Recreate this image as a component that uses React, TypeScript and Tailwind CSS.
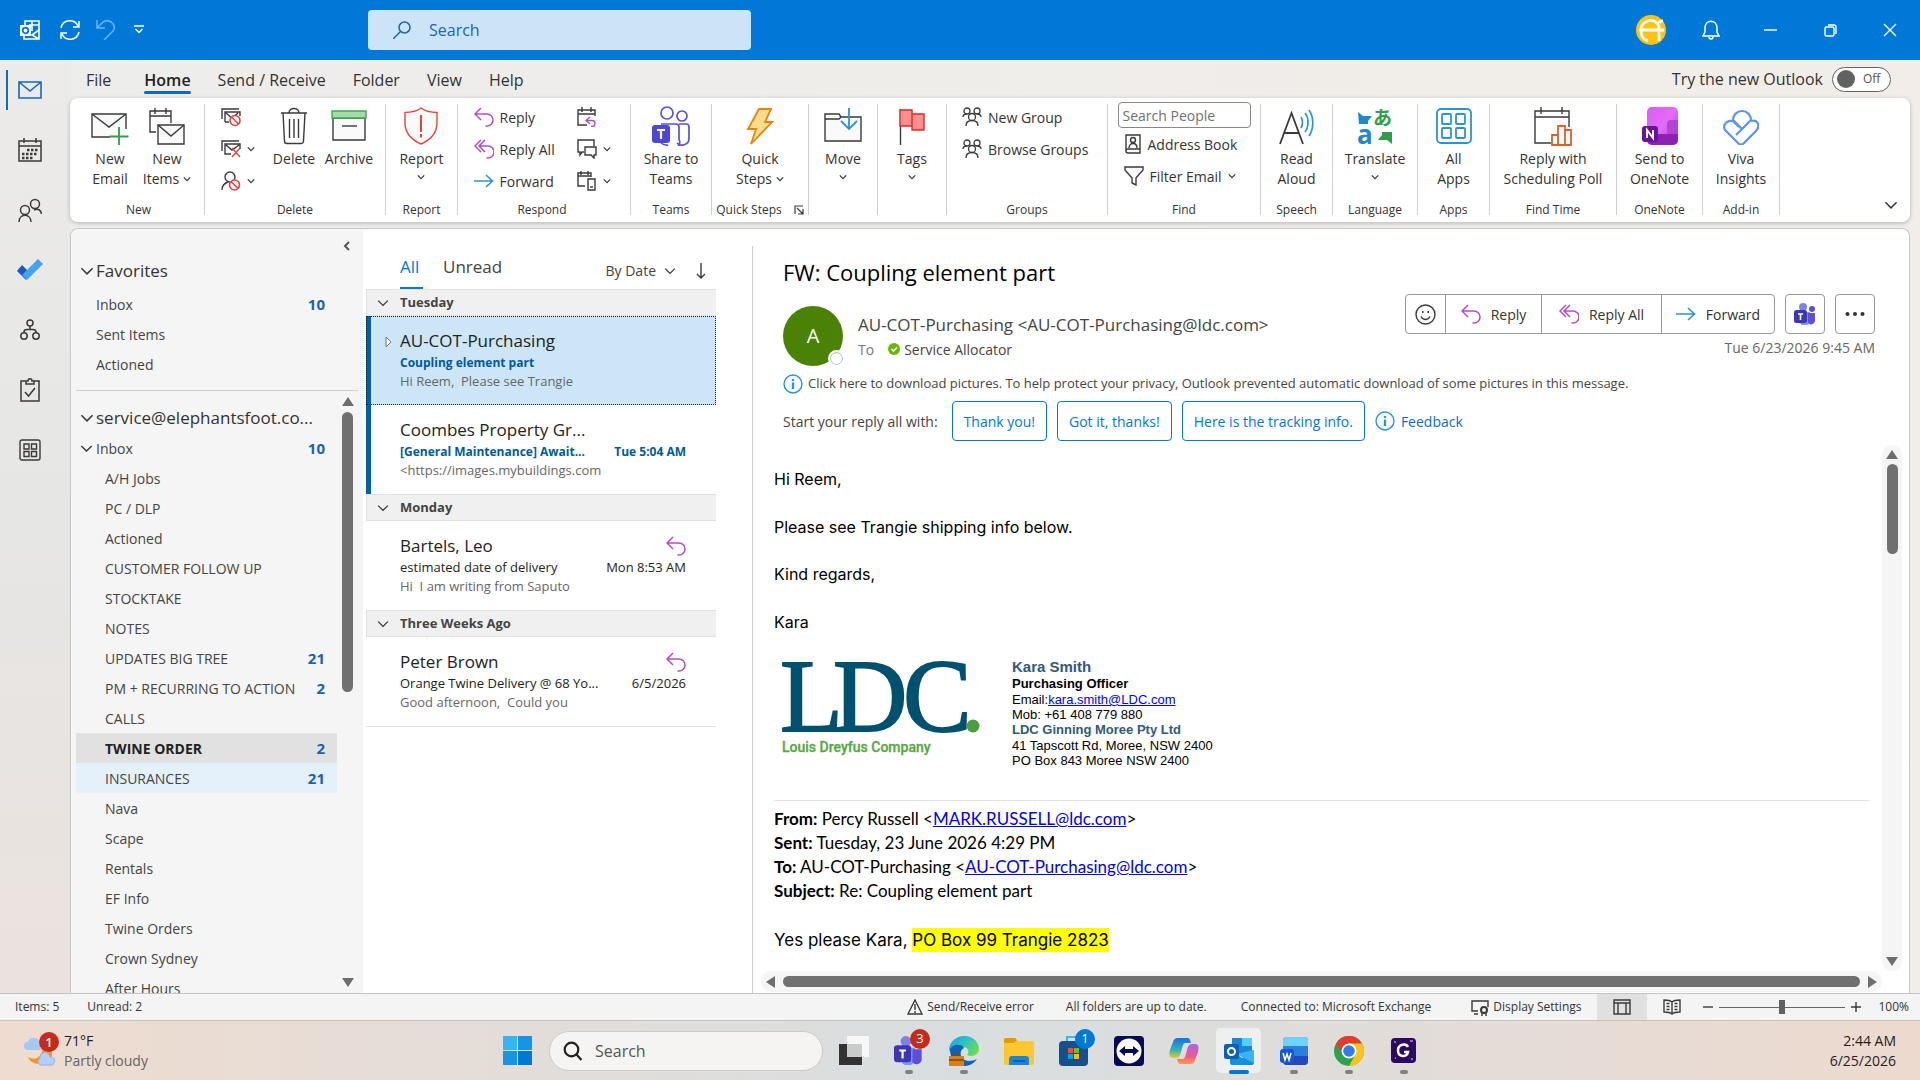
import type { ReactNode } from "react";

/* ---------- icons ---------- */

interface IconProps {
  w?: number;
  h?: number;
  box?: string;
  color?: string;
  sw?: number;
  children: ReactNode;
}

function Svg({ w = 20, h = w, box = `0 0 ${w} ${h}`, color = "#3b3a39", sw = 1.4, children }: IconProps) {
  return (
    <svg width={w} height={h} viewBox={box} fill="none" stroke={color} strokeWidth={sw} className="block shrink-0" aria-hidden="true">
      {children}
    </svg>
  );
}

const Chevron = ({ size = 8 }: { size?: number }) => (
  <Svg w={size} h={size} box="0 0 10 10" sw={size > 10 ? 1.1 : 1.6}><path d="M1 3l4 4 4-4" /></Svg>
);

const ReplyIcon = () => (
  <Svg color="#b14fbf" sw={1.5}><path d="M7 1L1 7l6 6M1 7h12a5.500 5.500 0 0 1 0 12h-1.500" /></Svg>
);
const ReplyAllIcon = () => (
  <Svg color="#b14fbf" sw={1.5}><path d="M7 1L1 7l6 6M11 1L5 7l6 6M5.500 7H14a5.500 5.500 0 0 1 0 12h-1.500" /></Svg>
);
const ForwardIcon = () => (
  <Svg color="#2b93d6" sw={1.6}><path d="M0 10h18M12 4l6.500 6-6.500 6" /></Svg>
);

const NewEmailIcon = () => (
  <Svg w={38} h={38}>
    <path d="M19 30H1V7h34v15" fill="#fafafa" /><path d="M1 7l17 13L35 7" />
    <path d="M28 20v19M18.500 29.500h19" stroke="#2e9e48" strokeWidth={1.8} />
  </Svg>
);
const NewItemsIcon = () => (
  <Svg w={38} h={38}>
    <path d="M8 25H2V4h21v12M2 9h21M7 1v6M18 1v6" /><path d="M10 18h26v19H10z" fill="#fafafa" /><path d="M10 18l13 11 13-11" />
  </Svg>
);
const Ban = ({ x, y }: { x: number; y: number }) => (
  <g stroke="#e8413c" strokeWidth={1.6}><circle cx={x} cy={y} r="5" fill="#fff" /><path d={`M${x - 3.500} ${y - 3.500}l7 7`} /></g>
);
const IgnoreIcon = () => (
  <Svg><path d="M4 15V5h15v4M4 15h4M1 12V2h17M5 6l6 5 6-5" /><Ban x={14} y={13.500} /></Svg>
);
const CleanUpIcon = () => (
  <Svg><path d="M10 15H4V5h15v5M1 12V2h17M5 6l6 5 7-5" /><path d="M11 9l8 9M19 9l-8 9" stroke="#e8413c" /></Svg>
);
const JunkIcon = () => (
  <Svg><circle cx="9" cy="6" r="5" /><path d="M1 19c0-4 3-7 6-8" /><Ban x={13.500} y={14} /></Svg>
);
const TrashIcon = () => (
  <Svg w={28} h={38}><path d="M1 6h26M9 6c0-6 10-6 10 0M3 6l1.500 28a2.500 2.500 0 0 0 2.500 2.500h14a2.500 2.500 0 0 0 2.500-2.500L25 6" /><path d="M9.500 12v19M14 12v19M18.500 12v19" /></Svg>
);
const ArchiveIcon = () => (
  <Svg w={36} h={38}><path d="M2 11h32v22H2z" fill="#fafafa" /><path d="M1 4h34v7H1z" fill="#a3dba9" stroke="#3fa656" /><path d="M11 19h15" /></Svg>
);
const ReportIcon = () => (
  <Svg w={34} h={38} color="#e8413c"><path d="M17 1c4 3 10 4.500 16 4.500V16c0 10-7 17-16 21C8 33 1 26 1 16V5.500C7 5.500 13 4 17 1z" fill="#fafafa" /><path d="M17 8v17M17 27v3.500" strokeWidth={2} /></Svg>
);
const MeetingIcon = () => (
  <Svg><path d="M10 18H1V3h17v6M1 7h17M5 0v5M14 0v5" /><path d="M13 10l-4 3.500 4 3.500M9 13.500h6a3 3 0 0 1 0 6h-1" stroke="#b14fbf" /></Svg>
);
const ChatIcon = () => (
  <Svg><path d="M7 13H5l-2 3v-3H1V1h16v6" /><path d="M8 8h11v8h-2v3l-3-3H8z" fill="#fafafa" /></Svg>
);
const MoreRespondIcon = () => (
  <Svg><path d="M8 15H1V2h13v4M1 5h13M4 0v4M11 0v4" /><path d="M11 8h7v11h-7z" fill="#fafafa" /><path d="M13 16h3" /></Svg>
);
const TeamsRibbonIcon = () => (
  <Svg w={38} h={40} color="#5b4fd6" sw={1.700}>
    <circle cx="15" cy="7" r="6" /><circle cx="30" cy="10" r="5" />
    <path d="M9 18h15a3 3 0 0 1 3 3v12a6 6 0 0 1-12 6h-1a9 9 0 0 1-7-5M27 18h7a3 3 0 0 1 3 3v11a7 7 0 0 1-12 5" />
    <rect x="0" y="19" width="18" height="18" rx="3" fill="#4f46d6" stroke="none" />
    <path d="M5 24h8M9 24v9" stroke="#fff" strokeWidth={2.200} />
  </Svg>
);
const BoltIcon = () => (
  <Svg w={28} h={38} color="#e8820c" sw={1.8}><path d="M13 2h12l-6 13h7L5 37l5-15H2z" fill="#fbdc8c" /></Svg>
);
const MoveIcon = () => (
  <Svg w={38} h={36}><path d="M1 6h14l2 3h20v24H1z" fill="#fafafa" /><path d="M1 11h14l2-2" /><path d="M25 0v21M17 13l8 8 8-8" stroke="#2b93d6" strokeWidth={1.8} /></Svg>
);
const FlagIcon = () => (
  <Svg w={26} h={38}><path d="M1.500 2v36" /><path d="M1 3h12v4h12v16H13v-4H1z" fill="#ff8f8c" stroke="#d92b28" /><path d="M13 7v12" stroke="#d92b28" /></Svg>
);
const GroupIcon = () => (
  <Svg sw={1.300}>
    <circle cx="5" cy="4" r="3" /><circle cx="15" cy="4" r="3" /><circle cx="10" cy="10" r="3.500" />
    <path d="M1 10c0-2 2-3 4-3M19 10c0-2-2-3-4-3M4 19c0-4 3-5.500 6-5.500s6 1.500 6 5.500" />
  </Svg>
);
const AddressIcon = () => (
  <Svg w={18} h={20}><path d="M2 1h14v18H4a2 2 0 0 1-2-2zM2 17c0-1.500 1-2 2-2h12" /><circle cx="9" cy="6" r="2.500" /><path d="M5 14c0-3 2-4.500 4-4.500s4 1.500 4 4.500" /></Svg>
);
const FunnelIcon = () => (
  <Svg><path d="M1 1h18v3l-7 8v7l-4-2v-5L1 4z" fill="#fafafa" /></Svg>
);
const ReadAloudIcon = () => (
  <Svg w={36} h={38}><path d="M1 37L12.500 6 24 37M5 26h15" strokeWidth={1.8} /><path d="M22 10c2 3 2 8 0 11M26 6c4 5 4 14 0 19M30 3c5 7 5 19 0 26" stroke="#2b93d6" strokeWidth={1.700} /></Svg>
);
const TranslateIcon = () => (
  <Svg w={36} h={38}>
    <path d="M1 5l5 4h9l-4 5v3H2z" fill="#1e88cf" stroke="none" />
    <path d="M35 37l-5-4h-9l4-5v-3h10z" fill="#2e9e48" stroke="none" />
    <text x="0" y="37" fontSize="26" fontWeight="700" fill="#1e88cf" stroke="none" fontFamily="Open Sans">a</text>
    <text x="16" y="18" fontSize="19" fontWeight="700" fill="#2e9e48" stroke="none" fontFamily="Noto Sans CJK JP">あ</text>
  </Svg>
);
const AppsIcon = () => (
  <Svg w={36} h={38} color="#2b93d6" sw={1.8}>
    <rect x="1" y="2" width="34" height="34" rx="4" />
    <rect x="6" y="7" width="9" height="10" rx="1" /><rect x="20" y="7" width="9" height="10" rx="1" />
    <rect x="6" y="21" width="9" height="10" rx="1" /><rect x="20" y="21" width="9" height="10" rx="1" />
  </Svg>
);
const PollIcon = () => (
  <Svg w={38} h={40}>
    <path d="M17 37H1V5h34v16M1 11h34M7 1v7M28 1v7" />
    <path d="M18 39V29h6v10zM24 39V20h7v19zM31 39V24h6v15z" fill="#fff" stroke="#e65a28" strokeWidth={1.8} />
  </Svg>
);
const OneNoteIcon = () => (
  <Svg w={36} h={38}>
    <defs><linearGradient id="note" x1="0" y1="0" x2="1" y2="1"><stop stopColor="#d95cf5" /><stop offset=".5" stopColor="#e46cf8" /><stop offset="1" stopColor="#b03ad0" /></linearGradient></defs>
    <rect x="5" y="0" width="31" height="38" rx="5" fill="url(#note)" stroke="none" />
    <path d="M5 27h31v6a5 5 0 0 1-5 5H10a5 5 0 0 1-5-5z" fill="#8c22b0" stroke="none" />
    <path d="M25 27V17a4 4 0 0 1 4-4h7v14z" fill="#b544d6" stroke="none" />
    <rect x="0" y="19" width="16" height="16" rx="3" fill="#6a12a0" stroke="none" />
    <path d="M5 31v-8l6 8v-8" stroke="#fff" strokeWidth={2} />
  </Svg>
);
const VivaIcon = () => (
  <Svg w={36} h={38} color="#5b93f5" sw={2.200}>
    <path d="M19 22L10 13a9 9 0 1 1 18 0L13 28" />
    <path d="M10 14c-8-1-11 6-7 10l12 12c2 2 4 2 6 0l12-12c5-6 1-12-5-10M10 14l6 6" />
  </Svg>
);

/* ---------- ribbon ---------- */

function Group({ label, className, children }: { label: ReactNode; className: string; children: ReactNode }) {
  return (
    <>
      <section className={`flex h-[115px] shrink-0 flex-col ${className}`}>
        <div className="flex flex-1 justify-center">{children}</div>
        <div className="flex items-center justify-center text-[12px] leading-3 whitespace-nowrap text-[#333]">{label}</div>
      </section>
      <div className="mt-[3px] h-[111px] w-px shrink-0 bg-[#cfcfcf]" />
    </>
  );
}

interface BigProps {
  icon: ReactNode;
  lines: string[];
  chevron?: "inline" | "below";
  className?: string;
}

function Big({ icon, lines, chevron, className = "" }: BigProps) {
  return (
    <button className={`flex flex-col items-center pt-[6px] text-[14px] leading-5 whitespace-nowrap ${className}`}>
      <span className="mb-1 flex h-[38px] items-center">{icon}</span>
      <span>{lines[0]}</span>
      {lines[1] && (
        <span className="flex items-center gap-1">{lines[1]}{chevron === "inline" && <Chevron />}</span>
      )}
      {chevron === "below" && <span className="flex h-4 items-center"><Chevron /></span>}
    </button>
  );
}

function Small({ icon, text, chevron }: { icon: ReactNode; text?: string; chevron?: boolean }) {
  return (
    <button className="flex h-8 items-center gap-[6px] text-[14px] whitespace-nowrap" aria-label={text ?? "More"}>
      {icon}{text}{chevron && <Chevron />}
    </button>
  );
}

function Ribbon() {
  return (
    <div className="mr-[10px] flex h-[124px] rounded-lg bg-white pt-[3px] text-[#333] shadow-[0_1px_4px_rgba(0,0,0,0.25)]">
      <Group label="New" className="w-[134px] pl-[3px]">
        <Big className="w-[57px]" icon={<NewEmailIcon />} lines={["New", "Email"]} />
        <Big className="w-[57px]" icon={<NewItemsIcon />} lines={["New", "Items"]} chevron="inline" />
      </Group>
      <Group label="Delete" className="w-[180px]">
        <div className="w-[46px] shrink-0">
          <Small icon={<IgnoreIcon />} /><Small icon={<CleanUpIcon />} chevron /><Small icon={<JunkIcon />} chevron />
        </div>
        <Big className="w-[54px]" icon={<TrashIcon />} lines={["Delete"]} />
        <Big className="-mr-2 w-[56px]" icon={<ArchiveIcon />} lines={["Archive"]} />
      </Group>
      <Group label="Report" className="w-[71px]">
        <Big icon={<ReportIcon />} lines={["Report"]} chevron="below" />
      </Group>
      <Group label="Respond" className="w-[172px] pr-1">
        <div className="w-[103px]">
          <Small icon={<ReplyIcon />} text="Reply" /><Small icon={<ReplyAllIcon />} text="Reply All" /><Small icon={<ForwardIcon />} text="Forward" />
        </div>
        <div>
          <Small icon={<MeetingIcon />} /><Small icon={<ChatIcon />} chevron /><Small icon={<MoreRespondIcon />} chevron />
        </div>
      </Group>
      <Group label="Teams" className="w-[80px]">
        <Big icon={<TeamsRibbonIcon />} lines={["Share to", "Teams"]} />
      </Group>
      <Group
        className="w-[96px]"
        label={
          <>
            <span className="mr-3">Quick Steps</span>
            <Svg w={10} h={10} sw={1.2}><path d="M1 9V1h8M3 3l6 6M9 4v5H4" /></Svg>
          </>
        }
      >
        <Big icon={<BoltIcon />} lines={["Quick", "Steps"]} chevron="inline" />
      </Group>
      <Group label="" className="w-[68px]"><Big icon={<MoveIcon />} lines={["Move"]} chevron="below" /></Group>
      <Group label="" className="w-[68px]"><Big icon={<FlagIcon />} lines={["Tags"]} chevron="below" /></Group>
      <Group label="Groups" className="w-[160px]">
        <div className="w-[130px]">
          <Small icon={<GroupIcon />} text="New Group" /><Small icon={<GroupIcon />} text="Browse Groups" />
        </div>
      </Group>
      <Group label="Find" className="w-[152px]">
        <div className="w-[133px] pt-px">
          <input aria-label="Search People" placeholder="Search People" className="block h-[26px] w-full rounded-sm border border-[#8a8886] px-1 text-[14px] placeholder:text-[#707070]" />
          <div className="pl-[6px]"><Small icon={<AddressIcon />} text="Address Book" /><Small icon={<FunnelIcon />} text="Filter Email" chevron /></div>
        </div>
      </Group>
      <Group label="Speech" className="w-[71px]"><Big icon={<ReadAloudIcon />} lines={["Read", "Aloud"]} /></Group>
      <Group label="Language" className="w-[84px]"><Big icon={<TranslateIcon />} lines={["Translate"]} chevron="below" /></Group>
      <Group label="Apps" className="w-[71px]"><Big icon={<AppsIcon />} lines={["All", "Apps"]} /></Group>
      <Group label="Find Time" className="w-[126px]"><Big icon={<PollIcon />} lines={["Reply with", "Scheduling Poll"]} /></Group>
      <Group label="OneNote" className="w-[85px]"><Big icon={<OneNoteIcon />} lines={["Send to", "OneNote"]} /></Group>
      <Group label="Add-in" className="w-[76px]"><Big icon={<VivaIcon />} lines={["Viva", "Insights"]} /></Group>
      <button className="mt-auto mr-3 mb-[10px] ml-auto" aria-label="Collapse ribbon"><Chevron size={14} /></button>
    </div>
  );
}

/* ---------- title bar, tabs, rail ---------- */

function TitleBar() {
  return (
    <header className="flex h-[60px] shrink-0 items-center bg-[#0078d7] pl-5">
      <Svg w={20} h={20} color="#fff" sw={1.6}>
        <path d="M5 5V1h14v10M9 5h10M12 1v10" /><path d="M19 9v10H4v-3M19 10l-7 5 7 4" />
        <rect x="0" y="5" width="11" height="11" fill="#fff" stroke="none" /><circle cx="5.500" cy="10.500" r="2.800" stroke="#0078d7" strokeWidth={1.800} />
      </Svg>
      <button className="ml-5" aria-label="Send/Receive all folders">
        <Svg color="#fff" sw={1.500}><path d="M1 8a9 9 0 0 1 17-2M19 1v6h-6M19 12a9 9 0 0 1-17 2M1 19v-6h6" /></Svg>
      </button>
      <button className="ml-4" aria-label="Undo">
        <Svg color="#6ab4f0" sw={1.500}><path d="M1 0v8h8M1 8l6-6c7-4 14 3 10 9l-9 9" /></Svg>
      </button>
      <button className="ml-[18px]" aria-label="Customize toolbar">
        <Svg w={10} h={10} color="#fff"><path d="M0 1h10M1.500 4L5 7.500 8.500 4" /></Svg>
      </button>
      <label className="ml-6 flex h-10 w-[383px] items-center gap-[18px] rounded bg-[#cce4f7] pl-[25px] lg:ml-[224px]">
        <Svg w={18} h={18} color="#1a66b0" sw={1.500}><circle cx="11.500" cy="6.500" r="5.500" /><path d="M7.500 10.500L0 18" /></Svg>
        <input aria-label="Search" placeholder="Search" className="w-72 bg-transparent text-[16px] outline-none placeholder:text-[#1a66b0]" />
      </label>
      <div className="ml-auto flex items-center pr-[23px]">
        <Svg w={30} h={30} color="#fff" sw={2.800}>
          <circle cx="15" cy="15" r="15" fill="#ffc20e" stroke="none" /><path d="M12 26C3 23 2 9 12 6c6-2 10 2 11 6v14M3 15h25M23 8c1-2 3-2 4-2" />
        </Svg>
        <button className="ml-9" aria-label="Notifications">
          <Svg w={18} h={20} color="#fff" sw={1.500}><path d="M1 16h16l-2-4V8c0-9-12-9-12 0v4zM7 17c0 2.500 4 2.500 4 0" /></Svg>
        </button>
        <button className="ml-11" aria-label="Minimize"><Svg w={13} h={13} color="#fff"><path d="M0 6h13" /></Svg></button>
        <button className="ml-[47px]" aria-label="Restore"><Svg w={13} h={13} color="#fff"><rect x="1" y="3" width="9" height="9" rx="1.500" /><path d="M4 1h6a2 2 0 0 1 2 2v7" /></Svg></button>
        <button className="ml-[46px]" aria-label="Close"><Svg w={14} h={14} color="#fff" sw={1.300}><path d="M1 1l12 12M13 1L1 13" /></Svg></button>
      </div>
    </header>
  );
}

const tabs = ["File", "Home", "Send / Receive", "Folder", "View", "Help"];

function TabRow() {
  return (
    <nav className="flex h-[38px] items-center pl-4 text-[16px] text-[#333]">
      <div className="flex gap-[27px] pt-[2px]">
        {tabs.map((t) =>
          t === "Home" ? (
            <button key={t} className="relative ml-[6px] font-semibold text-[#222]">
              {t}
              <span className="absolute inset-x-0 -bottom-[2px] h-[3px] rounded bg-[#0f6cbd]" />
            </button>
          ) : (
            <button key={t}>{t}</button>
          ),
        )}
      </div>
      <label htmlFor="new-outlook" className="ml-auto flex items-center gap-[9px] pr-[29px] text-[16px]">
        Try the new Outlook
        <span className="flex h-[25px] w-[59px] items-center gap-2 rounded-full border border-[#616161] bg-white pl-1 text-[12px] text-[#555]">
          <input id="new-outlook" type="checkbox" role="switch" className="h-[18px] w-[18px] appearance-none rounded-full bg-[#616161]" />
          Off
        </span>
      </label>
    </nav>
  );
}

const railIcons: { name: string; icon: ReactNode }[] = [
  { name: "Mail", icon: <Svg w={24} h={18} color="#0f6cbd" sw={1.600}><path d="M1 1h22v16H1zM1 1l11 9L23 1" /></Svg> },
  {
    name: "Calendar",
    icon: (
      <Svg w={24} h={24}>
        <path d="M1 3h22v20H1zM1 8h22M6 0v5M18 0v5" strokeWidth={1.500} />
        <path d="M9 12h11M4 16h16M4 20h11" strokeWidth={2.500} strokeDasharray="2.500 1.500" />
      </Svg>
    ),
  },
  { name: "People", icon: <Svg w={24} h={24} sw={1.500}><circle cx="17" cy="6" r="4.500" /><path d="M16 12c4-2 7 0 7.500 4" /><circle cx="7" cy="12" r="4.500" /><path d="M1 24c0-9 12-9 12 0" /></Svg> },
  {
    name: "To Do",
    icon: (
      <Svg w={26} h={22}>
        <path d="M5 6l8 8-4 7L0 12z" fill="#185abd" stroke="none" /><path d="M21 0l5 5L10 21l-5-5z" fill="#41a5ee" stroke="none" />
      </Svg>
    ),
  },
  { name: "Org Explorer", icon: <Svg w={20} h={22} sw={1.500}><circle cx="10" cy="4" r="3" /><circle cx="4" cy="17" r="3.200" /><circle cx="16" cy="17" r="3.200" /><path d="M10 7v4M4 13c0-2 1-2.500 3-2.500h6c2 0 3 .5 3 2.500" /></Svg> },
  { name: "Tasks", icon: <Svg w={20} h={24} sw={1.500}><path d="M6 3H1v20h18V3h-5M6 6V3h2c0-3 4-3 4 0h2v3zM5 14l3.500 4L15 10" /></Svg> },
  { name: "More apps", icon: <Svg w={22} h={22}><rect x="1" y="1" width="20" height="20" rx="2" /><path d="M5 5h5v5H5zM12.500 5h5v5h-5zM5 12.500h5v5H5zM12.500 12.500h5v5h-5z" /></Svg> },
];

function Rail() {
  return (
    <aside className="flex w-[70px] shrink-0 flex-col bg-linear-to-b from-[#ecebea] via-[#e6e6e4] to-[#ebe2de]">
      {railIcons.map((r, i) => (
        <button key={r.name} aria-label={r.name} className="relative flex h-[60px] w-[59px] items-center justify-center pb-px">
          {i === 0 && <span className="absolute top-[10px] left-[6px] h-10 w-[2px] bg-[#0f6cbd]" />}
          {r.icon}
        </button>
      ))}
    </aside>
  );
}

/* ---------- folder pane ---------- */

const Triangle = ({ d }: { d: string }) => <Svg w={12} h={12}><path d={d} fill="#6e6e6e" stroke="none" /></Svg>;
const UP = "M0 10h12L6 1z";
const DOWN = "M0 2h12L6 11z";
const LEFT = "M10 0v12L1 6z";
const RIGHT = "M2 0v12l9-6z";

interface Folder {
  name: string;
  count?: number;
}

const favorites: Folder[] = [{ name: "Inbox", count: 10 }, { name: "Sent Items" }, { name: "Actioned" }];

const folders: Folder[] = [
  { name: "A/H Jobs" },
  { name: "PC / DLP" },
  { name: "Actioned" },
  { name: "CUSTOMER FOLLOW UP" },
  { name: "STOCKTAKE" },
  { name: "NOTES" },
  { name: "UPDATES BIG TREE", count: 21 },
  { name: "PM + RECURRING TO ACTION", count: 2 },
  { name: "CALLS" },
  { name: "TWINE ORDER", count: 2 },
  { name: "INSURANCES", count: 21 },
  { name: "Nava" },
  { name: "Scape" },
  { name: "Rentals" },
  { name: "EF Info" },
  { name: "Twine Orders" },
  { name: "Crown Sydney" },
  { name: "After Hours" },
];

function FolderRow({ folder, className = "pl-5" }: { folder: Folder; className?: string }) {
  const tone =
    folder.name === "TWINE ORDER" ? "bg-[#e1e1e1] font-bold text-[#222]" : folder.name === "INSURANCES" ? "bg-[#e5f1fa]" : "";
  return (
    <button className={`flex h-[30px] w-full items-center justify-between pr-3 text-left text-[14px] whitespace-nowrap ${tone} ${className}`}>
      {folder.name}
      {folder.count && <span className="text-[15px] font-bold text-[#1a62b0]">{folder.count}</span>}
    </button>
  );
}

function FolderPane() {
  return (
    <div className="flex w-[292px] shrink-0 flex-col overflow-hidden rounded-tl-lg bg-[#f5f5f5] pl-[5px] text-[#444]">
      <div className="flex h-6 items-end justify-end pr-3">
        <button aria-label="Collapse folder pane"><Svg w={8} h={14} sw={2} color="#555"><path d="M6 3L2 7l4 4" /></Svg></button>
      </div>
      <button className="flex h-9 items-center gap-[2px] pl-1 text-[17px] text-[#333]"><Chevron size={14} />Favorites</button>
      <div className="mr-[26px]">
        {favorites.map((f) => <FolderRow key={f.name} folder={f} />)}
      </div>
      <div className="mt-[11px] mr-[5px] h-px shrink-0 bg-[#cfcfcf]" />
      <div className="flex min-h-0 flex-1">
        <div className="min-w-0 flex-1 overflow-hidden pt-3">
          <button className="flex h-[30px] items-center gap-[2px] pl-1 text-[17px] text-[#333]"><Chevron size={14} />service@elephantsfoot.co...</button>
          <div className="flex items-center">
            <span className="w-5 shrink-0 pl-1"><Chevron size={13} /></span>
            <FolderRow folder={{ name: "Inbox", count: 10 }} className="pl-0" />
          </div>
          {folders.map((f, i) => <FolderRow key={i} folder={f} className="pl-[29px]" />)}
        </div>
        <div className="flex w-[26px] flex-col items-center pt-[5px] pr-[5px] pb-[5px]">
          <Triangle d={UP} />
          <div className="my-1 flex min-h-0 flex-1 flex-col"><div className="h-1/2 w-[11px] rounded-full bg-[#707070]" /></div>
          <Triangle d={DOWN} />
        </div>
      </div>
    </div>
  );
}

/* ---------- message list ---------- */

interface Message {
  from: string;
  subject: string;
  preview: string;
  date?: string;
  unread?: boolean;
  selected?: boolean;
}

const days: { label: string; messages: Message[] }[] = [
  {
    label: "Tuesday",
    messages: [
      { from: "AU-COT-Purchasing", subject: "Coupling element part", preview: "Hi Reem,  Please see Trangie", unread: true, selected: true },
      { from: "Coombes Property Gr...", subject: "[General Maintenance] Await...", preview: "<https://images.mybuildings.com", date: "Tue 5:04 AM", unread: true },
    ],
  },
  { label: "Monday", messages: [{ from: "Bartels, Leo", subject: "estimated date of delivery", preview: "Hi  I am writing from Saputo", date: "Mon 8:53 AM" }] },
  { label: "Three Weeks Ago", messages: [{ from: "Peter Brown", subject: "Orange Twine Delivery @ 68 Yo...", preview: "Good afternoon,  Could you", date: "6/5/2026" }] },
];

function MessageRow({ m }: { m: Message }) {
  return (
    <button
      className={`relative flex h-[89px] w-full flex-col items-stretch justify-start pt-[13px] pr-[30px] text-left whitespace-pre ${
        m.unread ? "border-l-[5px] border-l-[#0060a8] pl-[29px]" : "pl-[34px]"
      } ${m.selected ? "bg-[#cde6f7] outline-1 -outline-offset-1 outline-dotted outline-[#222]" : ""}`}
    >
      {m.selected && <span className="absolute top-5 left-[14px]"><Svg w={8} h={12} sw={1} color="#777"><path d="M1 1v10l5-5z" fill="#fff" /></Svg></span>}
      <span className="flex h-6 items-center justify-between text-[17px] text-[#222]">
        {m.from}
        {!m.unread && <ReplyIcon />}
      </span>
      <span className={`flex h-[19px] items-center justify-between ${m.unread ? "text-[12px] font-bold text-[#005a9e]" : "text-[13px] text-[#222]"}`}>
        <span>{m.subject}</span>
        <span>{m.date}</span>
      </span>
      <span className="block text-[13px] leading-[18px] text-[#666]">{m.preview}</span>
    </button>
  );
}

function MessageList() {
  return (
    <div className="w-[389px] shrink-0 pr-9 pl-[3px]">
      <div className="flex h-[60px] items-end pr-[10px] pl-[34px] text-[#444]">
        <button className="flex h-[38px] w-[23px] border-b-2 border-[#0078d4] pt-1 text-[17px] leading-6 text-[#0078d4]">All</button>
        <button className="ml-5 flex h-[38px] pt-1 text-[17px] leading-6">Unread</button>
        <button className="ml-auto flex h-[29px] items-center gap-2 pb-2 text-[14px]">By Date <Chevron size={12} /></button>
        <button className="ml-5 flex h-[29px] items-center pb-2" aria-label="Reverse sort"><Svg w={10} h={16}><path d="M5 0v15M1 11l4 4 4-4" /></Svg></button>
      </div>
      {days.map((d) => (
        <section key={d.label}>
          <h3 className="flex h-[27px] items-center border-y border-l border-[#e1e1e1] bg-[#f0f0f0] pl-[10px] text-[13px] font-bold text-[#444]">
            <span className="w-[23px]"><Chevron size={12} /></span>
            {d.label}
          </h3>
          {d.messages.map((m) => <MessageRow key={m.from} m={m} />)}
        </section>
      ))}
      <div className="h-px bg-[#e1e1e1]" />
    </div>
  );
}

/* ---------- reading pane ---------- */

const InfoIcon = () => (
  <Svg w={20} h={20} color="#2b93d6"><circle cx="10" cy="10" r="9" fill="#f4fafe" /><path d="M10 8.500V15M10 5v2" strokeWidth={2.200} /></Svg>
);

const TeamsMini = ({ size = 22 }: { size?: number }) => (
  <Svg w={size} h={size} box="0 0 22 22">
    <circle cx="9" cy="4" r="4" fill="#7b83eb" stroke="none" /><circle cx="18" cy="6" r="3" fill="#5b4fd6" stroke="none" />
    <path d="M5 9h11v8a5 5 0 0 1-11 0z" fill="#7b93f5" stroke="none" /><path d="M14 10h7v8a4 4 0 0 1-7 2z" fill="#5b4fd6" stroke="none" />
    <rect x="0" y="7" width="13" height="13" rx="2.500" fill="#3d36b0" stroke="none" /><path d="M4 11h5M6.500 11v6" stroke="#fff" strokeWidth={1.600} />
  </Svg>
);

const quickReplies = ["Thank you!", "Got it, thanks!", "Here is the tracking info."];
const box = "flex h-10 items-center justify-center rounded border border-[#999] bg-white";

function MessageHeader() {
  return (
    <div className="shrink-0 pr-[34px] pl-[30px]">
      <h1 className="mt-[27px] text-[22px] leading-8 text-black">FW: Coupling element part</h1>
      <div className="mt-[18px] flex h-[64px]">
        <div className="relative flex h-[60px] w-[60px] shrink-0 items-center justify-center rounded-full bg-[#498205] text-[20px] text-white">
          A
          <span className="absolute -right-[2px] -bottom-[1px] h-[17px] w-[17px] rounded-full border-2 border-white bg-white shadow-[inset_0_0_0_1px_#9fb8c8]" />
        </div>
        <div className="pt-[7px] pl-[15px] text-[#444]">
          <p className="text-[17px] leading-6">AU-COT-Purchasing &lt;AU-COT-Purchasing@ldc.com&gt;</p>
          <p className="flex h-6 items-center text-[14px]">
            <span className="text-[#777]">To</span>
            <span className="mr-1 ml-[14px]"><Svg w={12} h={12} color="#fff"><circle cx="6" cy="6" r="6" fill="#6bb700" stroke="none" /><path d="M3.500 6l2 2 3.500-3.500" /></Svg></span>
            Service Allocator
          </p>
        </div>
        <div className="-mt-3 ml-auto text-[14px] text-[#333]">
          <div className="flex gap-[10px]">
            <div className="flex h-10 divide-x divide-[#999] rounded border border-[#999]">
              <button className="flex w-10 items-center justify-center" aria-label="React">
                <Svg w={21} h={21}><circle cx="10.500" cy="10.500" r="9.500" /><path d="M6 12.500c2 4 7 4 9 0" /><path d="M7 8h1.500M12.500 8H14" strokeWidth={2.200} /></Svg>
              </button>
              <button className="flex w-[96px] items-center justify-center gap-[10px]"><ReplyIcon />Reply</button>
              <button className="flex w-[120px] items-center justify-center gap-[10px]"><ReplyAllIcon />Reply All</button>
              <button className="flex w-[112px] items-center justify-center gap-[10px]"><ForwardIcon />Forward</button>
            </div>
            <button className={`${box} w-10`} aria-label="Share to Teams"><TeamsMini /></button>
            <button className={`${box} w-10`} aria-label="More actions">
              <Svg w={20} h={6}><g fill="#333" stroke="none"><circle cx="2.500" cy="3" r="2" /><circle cx="10" cy="3" r="2" /><circle cx="17.500" cy="3" r="2" /></g></Svg>
            </button>
          </div>
          <p className="pt-1 text-right leading-5 text-[#666]">Tue 6/23/2026 9:45 AM</p>
        </div>
      </div>
      <p className="mt-1 flex h-5 items-center gap-[5px] text-[13px] whitespace-nowrap text-[#444]">
        <InfoIcon />
        Click here to download pictures. To help protect your privacy, Outlook prevented automatic download of some pictures in this message.
      </p>
      <div className="mt-[7px] flex h-10 items-center text-[14px] text-[#444]">
        <span className="mr-[14px]">Start your reply all with:</span>
        {quickReplies.map((q) => (
          <button key={q} className="mr-[10px] h-full rounded border border-[#0078d4] px-[11px] text-[#0078d4]">{q}</button>
        ))}
        <a href="#feedback" className="flex items-center gap-[6px] text-[#0f6cbd]"><InfoIcon />Feedback</a>
      </div>
    </div>
  );
}

const link = "text-[#0000ee] underline";

function LdcLogo() {
  return (
    <svg width="200" height="98" viewBox="0 0 200 98" className="block shrink-0" role="img" aria-label="LDC Louis Dreyfus Company">
      <text x="-1 52 122" y="73" fontFamily="Liberation Serif" fontSize="103" fill="#00506f" stroke="#00506f" strokeWidth="1.8">LDC</text>
      <circle cx="192" cy="68" r="6.500" fill="#4a9e3e" />
      <text x="1" y="94" fontFamily="Roboto" fontSize="14" fontWeight="500" fill="#57a843" stroke="#57a843" strokeWidth="0.3">Louis Dreyfus Company</text>
    </svg>
  );
}

function MessageBody() {
  return (
    <div className="min-w-0 flex-1 overflow-hidden pr-3 pl-[21px] text-black">
      <div className="font-[Inter,sans-serif] text-[16px] leading-6">
        <p className="mt-[22px]">Hi Reem,</p>
        <p className="mt-6">Please see Trangie shipping info below.</p>
        <p className="mt-[23px]">Kind regards,</p>
        <p className="mt-6">Kara</p>
      </div>
      <div className="mt-6 flex h-[108px] pl-[7px] font-['Liberation_Sans',Arial,sans-serif] text-[13px] leading-[15px]">
        <LdcLogo />
        <div className="pl-[31px]">
          <p className="text-[15px] leading-[18px] font-bold text-[#305a78]">Kara Smith</p>
          <p className="leading-4 font-bold">Purchasing Officer</p>
          <p>Email:<a href="mailto:kara.smith@LDC.com" className={link}>kara.smith@LDC.com</a></p>
          <p>Mob: +61 408 779 880</p>
          <p className="leading-4 font-bold text-[#305a78]">LDC Ginning Moree Pty Ltd</p>
          <p>41 Tapscott Rd, Moree, NSW 2400</p>
          <p>PO Box 843 Moree NSW 2400</p>
        </div>
      </div>
      <hr className="mt-[34px] border-[#e1e1e1]" />
      <div className="mt-[6px] font-[Lato,sans-serif] text-[17px] leading-6">
        <p><b>From:</b> Percy Russell &lt;<a href="mailto:MARK.RUSSELL@ldc.com" className={link}>MARK.RUSSELL@ldc.com</a>&gt;</p>
        <p><b>Sent:</b> Tuesday, 23 June 2026 4:29 PM</p>
        <p><b>To:</b> AU-COT-Purchasing &lt;<a href="mailto:AU-COT-Purchasing@ldc.com" className={link}>AU-COT-Purchasing@ldc.com</a>&gt;</p>
        <p><b>Subject:</b> Re: Coupling element part</p>
      </div>
      <p className="mt-[25px] font-[Inter,sans-serif] text-[17px] leading-6">
        Yes please Kara, <mark className="bg-[#ffff00] py-[2px]">PO Box 99 Trangie 2823</mark>
      </p>
    </div>
  );
}

function ReadingPane() {
  return (
    <main className="flex min-w-0 flex-1 flex-col">
      <div className="mt-[17px] flex min-h-0 flex-1 flex-col border-l border-[#cfcfcf]">
        <div className="-mt-[17px]"><MessageHeader /></div>
        <div className="flex min-h-0 flex-1 pt-1 pr-[7px]">
          <MessageBody />
          <div className="flex w-5 flex-col items-center rounded-full bg-[#f5f5f5] py-1">
            <Triangle d={UP} />
            <div className="mt-[3px] flex min-h-0 flex-1 flex-col"><div className="h-[90px] w-[11px] rounded-full bg-[#707070]" /></div>
            <Triangle d={DOWN} />
          </div>
        </div>
        <div className="mr-[27px] mb-px ml-2 flex h-[21px] items-center gap-[6px] rounded-full bg-[#f5f5f5] px-1">
          <Triangle d={LEFT} />
          <div className="h-[11px] flex-1 rounded-full bg-[#707070]" />
          <Triangle d={RIGHT} />
        </div>
      </div>
    </main>
  );
}

/* ---------- status bar ---------- */

function StatusBar() {
  return (
    <footer className="flex h-7 shrink-0 items-center border-y border-[#c4c4c4] bg-[#f4f4f4] pl-[15px] text-[12px] whitespace-nowrap text-[#333]">
      <span>Items: 5</span>
      <span className="ml-7">Unread: 2</span>
      <div className="ml-auto flex h-full items-center">
        <Svg w={16} h={16}><path d="M8 1l7 14H1zM8 5v6M8 12v2" /></Svg>
        <span className="mr-8 ml-1">Send/Receive error</span>
        <span className="mr-[34px]">All folders are up to date.</span>
        <span className="mr-10">Connected to: Microsoft Exchange</span>
        <button className="flex items-center gap-1">
          <Svg w={18} h={17}><path d="M7 12H1V2h16v6M3 15h4" /><circle cx="13" cy="11" r="3" strokeWidth={2} /><path d="M11 14v3M15 14v3" /></Svg>
          Display Settings
        </button>
        <button className="ml-4 flex h-full w-[50px] items-center justify-center bg-[#e0e0e0]" aria-label="Normal view">
          <Svg w={18} h={16}><path d="M1 1h16v14H1zM1 4h16M5 4v11M13 4v11" /></Svg>
        </button>
        <button className="flex w-[50px] justify-center" aria-label="Reading view">
          <Svg w={18} h={16}><path d="M9 3C7 1 4 1 1 1v12c3 0 6 0 8 2 2-2 5-2 8-2V1c-3 0-6 0-8 2zM9 3v12M3.500 4.500h3M3.500 7.500h3M3.500 10.500h3M11.500 4.500h3M11.500 7.500h3M11.500 10.500h3" /></Svg>
        </button>
        <button className="ml-[6px]" aria-label="Zoom out"><Svg w={10} h={10}><path d="M0 5h10" /></Svg></button>
        <input
          type="range"
          defaultValue={50}
          aria-label="Zoom"
          className="mx-[6px] h-4 w-[126px] appearance-none bg-[linear-gradient(#666,#666)] bg-[length:100%_1px] bg-center bg-no-repeat [&::-webkit-slider-thumb]:h-[14px] [&::-webkit-slider-thumb]:w-[6px] [&::-webkit-slider-thumb]:appearance-none [&::-webkit-slider-thumb]:bg-[#606060]"
        />
        <button aria-label="Zoom in"><Svg w={10} h={10}><path d="M0 5h10M5 0v10" /></Svg></button>
        <span className="mr-[11px] ml-[17px]">100%</span>
      </div>
    </footer>
  );
}

/* ---------- taskbar ---------- */

interface TaskApp {
  name: string;
  icon: ReactNode;
  badge?: ReactNode;
  running?: boolean;
  active?: boolean;
}

const apps: TaskApp[] = [
  {
    name: "Task view",
    icon: (
      <Svg w={30} h={30}>
        <path d="M0 8h23v21H0z" fill="#333" stroke="none" /><path d="M8 0h22v21H8z" fill="#fff" fillOpacity={0.75} stroke="none" />
      </Svg>
    ),
  },
  { name: "Teams", icon: <TeamsMini size={29} />, running: true, badge: <span className="flex h-5 w-5 items-center justify-center rounded-full bg-[#c42b1c] text-[13px] text-white">3</span> },
  {
    name: "Edge",
    running: true,
    icon: (
      <Svg w={30} h={30}>
        <defs><linearGradient id="edge" x1="0" y1="0" x2="1" y2="0.6"><stop stopColor="#1b9de2" /><stop offset=".5" stopColor="#2cc3c4" /><stop offset="1" stopColor="#6bdd4c" /></linearGradient></defs>
        <path d="M0 14C1-4 29-5 30 13c0 7-8 8-12 6 3-3 1-8-4-8-6 0-9 5-7 11z" fill="url(#edge)" stroke="none" />
        <path d="M1 13c3-5 12-6 14-1-5 2-5 12 4 13 4 0 7-1 9-2-5 8-15 9-21 4-4-3-6-8-6-14z" fill="#0c62b5" stroke="none" />
        <path d="M0 20h15v10H0z" fill="#d98011" stroke="none" /><path d="M0 24h15M5 20v-2h5v2" stroke="#804308" />
      </Svg>
    ),
  },
  {
    name: "File Explorer",
    icon: (
      <Svg w={30} h={30}>
        <path d="M0 4a2 2 0 0 1 2-2h9l3 3h14a2 2 0 0 1 2 2v20a2 2 0 0 1-2 2H2a2 2 0 0 1-2-2z" fill="#fcc72f" stroke="none" />
        <path d="M0 4a2 2 0 0 1 2-2h9l2 2-3 3H0z" fill="#e09b0a" stroke="none" />
        <path d="M5 29v-6a3 3 0 0 1 3-3h14a3 3 0 0 1 3 3v6z" fill="#1a86d9" stroke="none" /><path d="M9 25h12" stroke="#0a4f94" />
      </Svg>
    ),
  },
  {
    name: "Store",
    icon: (
      <Svg w={29} h={30}>
        <path d="M8 6V1h12v5" stroke="#38b6f1" strokeWidth={2} /><rect x="0" y="5" width="29" height="25" rx="4" fill="#16508c" stroke="none" />
        <g stroke="none"><path d="M9 12h5v5H9z" fill="#f25022" /><path d="M15 12h5v5h-5z" fill="#7fba00" /><path d="M9 18h5v5H9z" fill="#00a4ef" /><path d="M15 18h5v5h-5z" fill="#ffb900" /></g>
      </Svg>
    ),
    badge: <span className="flex h-5 w-5 items-center justify-center rounded-full bg-[#0078d4] text-[13px] text-white">1</span>,
  },
  {
    name: "TeamViewer",
    icon: (
      <Svg w={30} h={30}>
        <rect width="30" height="30" rx="4" fill="#050a52" stroke="none" /><circle cx="15" cy="15" r="12.500" fill="#fff" stroke="none" />
        <path d="M5 15l6-5v3h8v-3l6 5-6 5v-3h-8v3z" fill="#050a52" stroke="none" />
      </Svg>
    ),
  },
  {
    name: "Copilot",
    icon: (
      <Svg w={30} h={30}>
        <defs>
          <linearGradient id="cop1" x1="0" y1="0" x2="0" y2="1"><stop stopColor="#1b6fe0" /><stop offset=".6" stopColor="#30b6b0" /><stop offset="1" stopColor="#f4c430" /></linearGradient>
          <linearGradient id="cop2" x1="0" y1="0" x2="0" y2="1"><stop stopColor="#a765e8" /><stop offset=".6" stopColor="#ee5a94" /><stop offset="1" stopColor="#ff9a4d" /></linearGradient>
        </defs>
        <path d="M9 2h9c3 0 3 2 4 5h-5c-3 0-3 2-5 9-1 4-2 6-6 6H4c-4 0-4-4-3-8l3-8c1-3 2-4 5-4z" fill="url(#cop1)" stroke="none" />
        <path d="M21 28h-9c-3 0-3-2-4-5h5c3 0 3-2 5-9 1-4 2-6 6-6h2c4 0 4 4 3 8l-3 8c-1 3-2 4-5 4z" fill="url(#cop2)" stroke="none" />
      </Svg>
    ),
  },
  {
    name: "Outlook",
    running: true,
    active: true,
    icon: (
      <Svg w={30} h={28}>
        <g stroke="none"><path d="M8 1h20v16H8z" fill="#1a86d9" /><path d="M18 1h10v8H18z" fill="#50d0ff" /><path d="M6 13l12 8 12-8v13a2 2 0 0 1-2 2H8a2 2 0 0 1-2-2z" fill="#1490df" /><path d="M30 13v13L12 17z" fill="#37b6f4" /><rect y="7" width="15" height="15" rx="2" fill="#0f5fb5" /></g>
        <circle cx="7.500" cy="14.500" r="3.500" stroke="#fff" strokeWidth={2} />
      </Svg>
    ),
  },
  {
    name: "Word",
    running: true,
    icon: (
      <Svg w={28} h={30}>
        <g stroke="none"><rect x="3" y="1" width="25" height="28" rx="4" fill="#2b7de0" /><path d="M3 10h25V5a4 4 0 0 0-4-4H7a4 4 0 0 0-4 4z" fill="#6cd3fa" /><path d="M3 20h25v5a4 4 0 0 1-4 4H7a4 4 0 0 1-4-4z" fill="#2447c4" /><rect y="13" width="14" height="14" rx="3" fill="#1659c9" /></g>
        <path d="M3 17l2 7 2-6 2 6 2-7" stroke="#fff" strokeWidth={1.500} />
      </Svg>
    ),
  },
  {
    name: "Chrome",
    running: true,
    icon: (
      <Svg w={30} h={30}>
        <g stroke="none">
          <circle cx="15" cy="15" r="15" fill="#2ba24c" /><path d="M2 7.500A15 15 0 0 1 28 7.500H15L9 19z" fill="#e33b2e" />
          <path d="M28 7.500A15 15 0 0 1 15 30l6.500-11.500L15 7.500z" fill="#fcc31e" /><circle cx="15" cy="15" r="7.500" fill="#fff" /><circle cx="15" cy="15" r="5.800" fill="#2f7de9" />
        </g>
      </Svg>
    ),
  },
  {
    name: "G app",
    running: true,
    icon: (
      <Svg w={25} h={25}>
        <rect width="25" height="25" rx="4" fill="#2c0a63" stroke="none" /><path d="M17 9c-2-4-10-3-10 3.500S16 20 17 14h-4" stroke="#fff" strokeWidth={2.500} />
        <path d="M3 4h2M19 3h3M4 20h1M20 21h2" stroke="#b58af0" />
      </Svg>
    ),
  },
];

function Taskbar() {
  return (
    <div className="flex h-[59px] shrink-0 items-center bg-linear-to-r from-[#efdcd0] via-[#d8dee0] to-[#eddacf]">
      <button className="flex w-[491px] shrink-0 items-center gap-2 pl-6 text-left text-[14px] leading-5">
        <span className="relative">
          <Svg w={32} h={34}>
            <path d="M18 12c2 9-6 16-14 11 3 10 24 10 24-4 0-3-3-6-6-7z" fill="#f6961e" stroke="none" />
            <path d="M4 16a4 4 0 0 1 0-8 6 6 0 0 1 11-1 4 4 0 0 1 1 9z" fill="#a6c8f5" stroke="none" />
            <path d="M16 31a4 4 0 0 1 0-7 5 5 0 0 1 10-1 4 4 0 0 1 1 8z" fill="#b4d0fa" stroke="#8ab0ea" strokeWidth={1} />
          </Svg>
          <span className="absolute -top-[2px] left-[15px] flex h-5 w-5 items-center justify-center rounded-full bg-[#c42b1c] text-[13px] font-semibold text-white">1</span>
        </span>
        <span>
          <span className="block text-[#222]">71°F</span>
          <span className="block text-[#666]">Partly cloudy</span>
        </span>
      </button>
      <button className="ml-3" aria-label="Start">
        <Svg w={29} h={29}><path d="M0 0h14v14H0z" fill="#36b4f5" stroke="none" /><path d="M15 0h14v14H15zM0 15h14v14H0z" fill="#1694e6" stroke="none" /><path d="M15 15h14v14H15z" fill="#0078d4" stroke="none" /></Svg>
      </button>
      <label className="ml-[17px] flex h-10 w-[274px] items-center gap-3 rounded-full border border-[#cfcac6] bg-[#f6f4f2] pl-[13px]">
        <Svg w={20} h={20} color="#222" sw={2.200}><circle cx="8.500" cy="8.500" r="6.800" /><path d="M13.500 13.500L18.500 19" /></Svg>
        <input aria-label="Search Windows" placeholder="Search" className="w-48 bg-transparent text-[16px] outline-none placeholder:text-[#555]" />
      </label>
      <div className="ml-[3px] flex h-full items-center">
        {apps.map((a) => (
          <button key={a.name} aria-label={a.name} className="relative flex h-full w-[55px] items-center justify-center">
            {a.active && <span className="absolute inset-x-1 inset-y-[6px] rounded-md border border-[#dcdcdc] bg-[#eef0f0]" />}
            <span className="relative">{a.icon}</span>
            {a.badge && <span className="absolute top-2 right-[6px]">{a.badge}</span>}
            {a.running && (
              <span className={`absolute bottom-[6px] h-[4px] rounded-full ${a.active ? "w-5 bg-[#0078d4]" : "w-2 bg-[#808080]"}`} />
            )}
          </button>
        ))}
      </div>
      <button className="mr-6 ml-auto text-right text-[14px] leading-5 text-[#222]">2:44 AM<br />6/25/2026</button>
    </div>
  );
}

export default function App() {
  return (
    <div className="flex h-screen flex-col overflow-hidden bg-[#f0ece9] font-['Open_Sans','Noto_Sans',sans-serif]">
      <TitleBar />
      <div className="flex min-h-0 flex-1">
        <Rail />
        <div className="flex min-w-0 flex-1 flex-col bg-linear-to-r from-[#ededec] to-[#f2ede8]">
          <TabRow />
          <Ribbon />
          <div className="mt-[6px] mr-[10px] flex min-h-0 flex-1 rounded-t-lg border border-b-0 border-[#c8c8c8] bg-white">
            <FolderPane />
            <MessageList />
            <ReadingPane />
          </div>
        </div>
      </div>
      <StatusBar />
      <Taskbar />
    </div>
  );
}
